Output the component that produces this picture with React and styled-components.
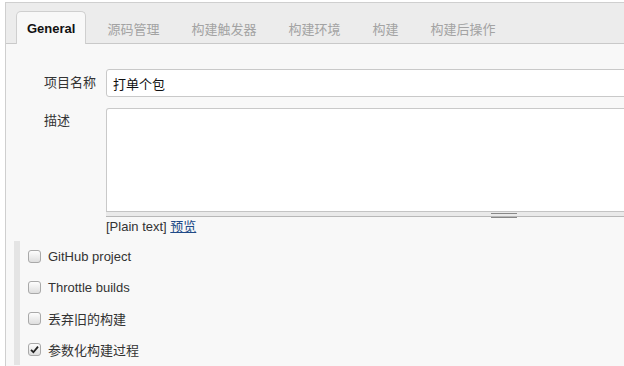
import styled, { createGlobalStyle } from "styled-components";

const Global = createGlobalStyle`
  html, body {
    margin: 0;
    padding: 0;
    overflow: hidden;
    background: #fff;
  }
  body {
    padding: 2px 0 0 5px;
    font-family: "Liberation Sans", "Noto Sans CJK SC", sans-serif;
    font-size: 13px;
    color: #333;
  }
`

const Panel = styled.div`
  width: calc(100vw - 5px);
  height: calc(100vh - 2px);
  box-sizing: border-box;
  overflow: hidden;
  border-top: 1px solid #cfcfcf;
  border-left: 1px solid #cfcfcf;
  background: #f8f8f8;
`

const TabBar = styled.div`
  display: flex;
  align-items: flex-end;
  gap: 10px;
  height: 41px;
  padding-left: 10px;
  background: #ececec;
  border-bottom: 1px solid #c9c9c9;
  box-sizing: border-box;
`

const Tab = styled.div`
  height: 33px;
  padding: 0 10px;
  display: flex;
  align-items: center;
  box-sizing: border-box;
  margin-bottom: -1px;
  border: 1px solid ${p => (p.$active ? "#cfcfcf" : "transparent")};
  border-bottom: none;
  border-radius: 5px 5px 0 0;
  background: ${p => (p.$active ? "#f8f8f8" : "transparent")};
  color: ${p => (p.$active ? "#111" : "#a3a3a3")};
  font-weight: ${p => (p.$active ? "bold" : "normal")};
  font-size: 13px;
`

const Body = styled.div`
  padding: 25px 0 0 8px;
`

const FieldRow = styled.div`
  display: flex;
  align-items: ${p => (p.$top ? "flex-start" : "center")};
  padding-left: 30px;
  margin-bottom: 11px;
`

const Label = styled.div`
  flex: none;
  width: 62px;
  line-height: 18px;
  padding-top: ${p => (p.$top ? "4px" : "0")};
`

const TextInput = styled.div`
  flex: none;
  width: 800px;
  height: 28px;
  box-sizing: border-box;
  border: 1px solid #c9c9c9;
  border-radius: 3px;
  background: #fff;
  padding: 0 6px;
  display: flex;
  align-items: center;
  color: #111;
`

const EditorBox = styled.div`
  flex: none;
  width: 796px;
`

const TextArea = styled.div`
  height: 103px;
  box-sizing: border-box;
  border: 1px solid #c9c9c9;
  border-bottom: none;
  border-radius: 3px 3px 0 0;
  background: #fff;
`

const Handle = styled.div`
  height: 6px;
  box-sizing: border-box;
  border-top: 1px solid #c4c4c4;
  border-bottom: 1px solid #b8b8b8;
  background: #eaeaea;
  display: flex;
  justify-content: center;
  padding-top: 1px;
`

const Grip = styled.div`
  width: 26px;
  height: 3px;
  border-top: 1px solid #888;
  border-bottom: 1px solid #888;
`

const Hint = styled.div`
  margin-top: 2px;
  line-height: 16px;
  color: #333;

  a {
    color: #204a87;
    text-decoration: underline;
  }
`

const Section = styled.div`
  margin-top: -5px;
  border-left: 6px solid #e4e4e4;
  padding-left: 8px;
`

const CheckRow = styled.div`
  height: 31px;
  display: flex;
  align-items: center;
  gap: 7px;
`

const Box = styled.span`
  flex: none;
  width: 13px;
  height: 13px;
  box-sizing: border-box;
  border: 1px solid #a9a9a9;
  border-radius: 3px;
  background: linear-gradient(#fdfdfd, #dedede);
  display: flex;
  align-items: center;
  justify-content: center;
`

const tabs = ["General", "源码管理", "构建触发器", "构建环境", "构建", "构建后操作"];

const options = [
  { label: "GitHub project", checked: false },
  { label: "Throttle builds", checked: false },
  { label: "丢弃旧的构建", checked: false },
  { label: "参数化构建过程", checked: true },
];

export default function App() {
  return (
    <>
      <Global />
      <Panel>
        <TabBar>
          {tabs.map((t, i) => (
            <Tab key={t} $active={i === 0}>{t}</Tab>
          ))}
        </TabBar>
        <Body>
          <FieldRow>
            <Label>项目名称</Label>
            <TextInput>打单个包</TextInput>
          </FieldRow>
          <FieldRow $top>
            <Label $top>描述</Label>
            <EditorBox>
              <TextArea />
              <Handle><Grip /></Handle>
              <Hint>[Plain text] <a href="#">预览</a></Hint>
            </EditorBox>
          </FieldRow>
          <Section>
            {options.map(o => (
              <CheckRow key={o.label}>
                <Box>
                  {o.checked && (
                    <svg width="9" height="9" viewBox="0 0 9 9">
                      <path d="M1 4.8 L3.4 7.2 L8 1.6" fill="none" stroke="#222" strokeWidth="1.8" />
                    </svg>
                  )}
                </Box>
                <span>{o.label}</span>
              </CheckRow>
            ))}
          </Section>
        </Body>
      </Panel>
    </>
  );
}
